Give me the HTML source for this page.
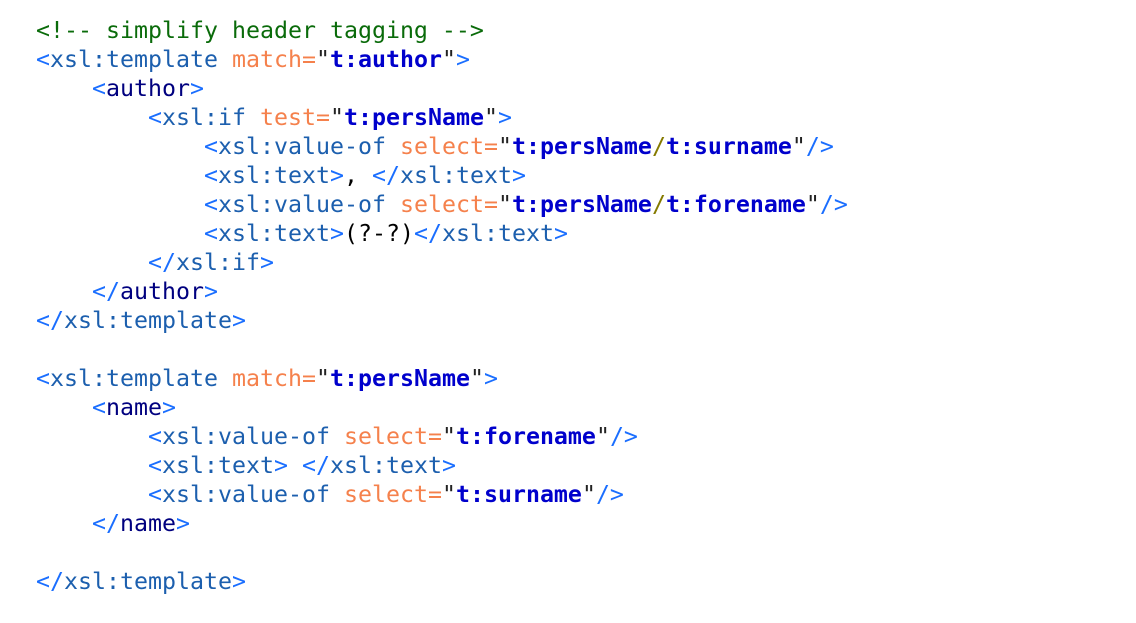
<!DOCTYPE html>
<html><head><meta charset="utf-8"><style>
html,body{margin:0;padding:0;background:#fff;width:1136px;height:623px;overflow:hidden}
pre{margin:0;position:absolute;left:36px;top:16px;font-family:"DejaVu Sans Mono","Liberation Mono",monospace;font-size:23.25px;line-height:29px;color:#000}
.c{color:#0a6b0a}.p{color:#1a6eff}.t{color:#1c5fae}.e{color:#00007f}.a{color:#f5814c}.q{color:#222}.v{color:#0000cc;font-weight:bold}.s{color:#857a00}
</style></head><body><pre><span class="c">&lt;!-- simplify header tagging --&gt;</span>
<span class="p">&lt;</span><span class="t">xsl:template</span> <span class="a">match=</span><span class="q">"</span><span class="v">t:author</span><span class="q">"</span><span class="p">&gt;</span>
    <span class="p">&lt;</span><span class="e">author</span><span class="p">&gt;</span>
        <span class="p">&lt;</span><span class="t">xsl:if</span> <span class="a">test=</span><span class="q">"</span><span class="v">t:persName</span><span class="q">"</span><span class="p">&gt;</span>
            <span class="p">&lt;</span><span class="t">xsl:value-of</span> <span class="a">select=</span><span class="q">"</span><span class="v">t:persName</span><span class="s">/</span><span class="v">t:surname</span><span class="q">"</span><span class="p">/&gt;</span>
            <span class="p">&lt;</span><span class="t">xsl:text</span><span class="p">&gt;</span>, <span class="p">&lt;/</span><span class="t">xsl:text</span><span class="p">&gt;</span>
            <span class="p">&lt;</span><span class="t">xsl:value-of</span> <span class="a">select=</span><span class="q">"</span><span class="v">t:persName</span><span class="s">/</span><span class="v">t:forename</span><span class="q">"</span><span class="p">/&gt;</span>
            <span class="p">&lt;</span><span class="t">xsl:text</span><span class="p">&gt;</span>(?-?)<span class="p">&lt;/</span><span class="t">xsl:text</span><span class="p">&gt;</span>
        <span class="p">&lt;/</span><span class="t">xsl:if</span><span class="p">&gt;</span>
    <span class="p">&lt;/</span><span class="e">author</span><span class="p">&gt;</span>
<span class="p">&lt;/</span><span class="t">xsl:template</span><span class="p">&gt;</span>

<span class="p">&lt;</span><span class="t">xsl:template</span> <span class="a">match=</span><span class="q">"</span><span class="v">t:persName</span><span class="q">"</span><span class="p">&gt;</span>
    <span class="p">&lt;</span><span class="e">name</span><span class="p">&gt;</span>
        <span class="p">&lt;</span><span class="t">xsl:value-of</span> <span class="a">select=</span><span class="q">"</span><span class="v">t:forename</span><span class="q">"</span><span class="p">/&gt;</span>
        <span class="p">&lt;</span><span class="t">xsl:text</span><span class="p">&gt;</span> <span class="p">&lt;/</span><span class="t">xsl:text</span><span class="p">&gt;</span>
        <span class="p">&lt;</span><span class="t">xsl:value-of</span> <span class="a">select=</span><span class="q">"</span><span class="v">t:surname</span><span class="q">"</span><span class="p">/&gt;</span>
    <span class="p">&lt;/</span><span class="e">name</span><span class="p">&gt;</span>

<span class="p">&lt;/</span><span class="t">xsl:template</span><span class="p">&gt;</span></pre></body></html>
